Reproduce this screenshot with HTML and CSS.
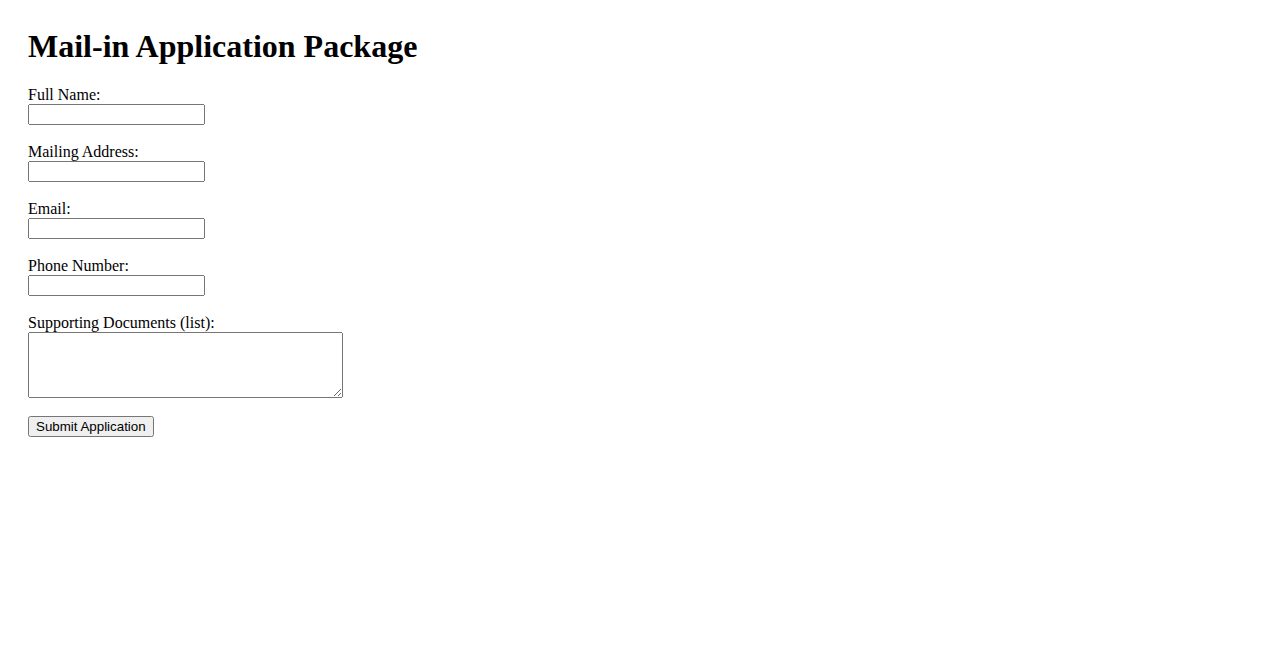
FILE: index.html
```html
<!DOCTYPE html>
<html>
<head>
<meta charset="utf-8">
<title>Mail-in Application Package</title>
<link rel="stylesheet" href="styles.css">
</head>
<body>
<h1 class="title">Mail-in Application Package</h1>
<form class="app-form">
  <div class="form-group">
    <label class="field-label" for="name">Full Name:</label>
    <input class="field-input" type="text" id="name">
  </div>
  <div class="form-group">
    <label class="field-label" for="addr">Mailing Address:</label>
    <input class="field-input" type="text" id="addr">
  </div>
  <div class="form-group">
    <label class="field-label" for="email">Email:</label>
    <input class="field-input" type="email" id="email">
  </div>
  <div class="form-group">
    <label class="field-label" for="phone">Phone Number:</label>
    <input class="field-input" type="tel" id="phone">
  </div>
  <div class="form-group">
    <label class="field-label" for="docs">Supporting Documents (list):</label>
    <textarea class="field-area" id="docs" rows="4" cols="40"></textarea>
  </div>
  <button class="submit-btn" type="submit">Submit Application</button>
</form>
</body>
</html>
```

FILE: styles.css
```css
body {
  margin: 28px;
  font-family: "Liberation Serif", "Times New Roman", serif;
  font-size: 16px;
  color: #000;
  background: #fff;
}
.title {
  font-size: 32px;
  font-weight: bold;
  margin: 0 0 21px 0;
}
.form-group {
  margin-bottom: 18px;
}
.field-label {
  display: block;
}
.field-input {
  box-sizing: border-box;
  width: 177px;
  height: 21px;
  font-family: "Liberation Sans", Arial, sans-serif;
  font-size: 13.33px;
}
.field-area {
  display: block;
  box-sizing: border-box;
  width: 315px;
  height: 66px;
  margin: 0;
  font-family: "Liberation Mono", monospace;
  font-size: 13.33px;
}
.submit-btn {
  font-family: "Liberation Sans", Arial, sans-serif;
  font-size: 13.33px;
}
```
